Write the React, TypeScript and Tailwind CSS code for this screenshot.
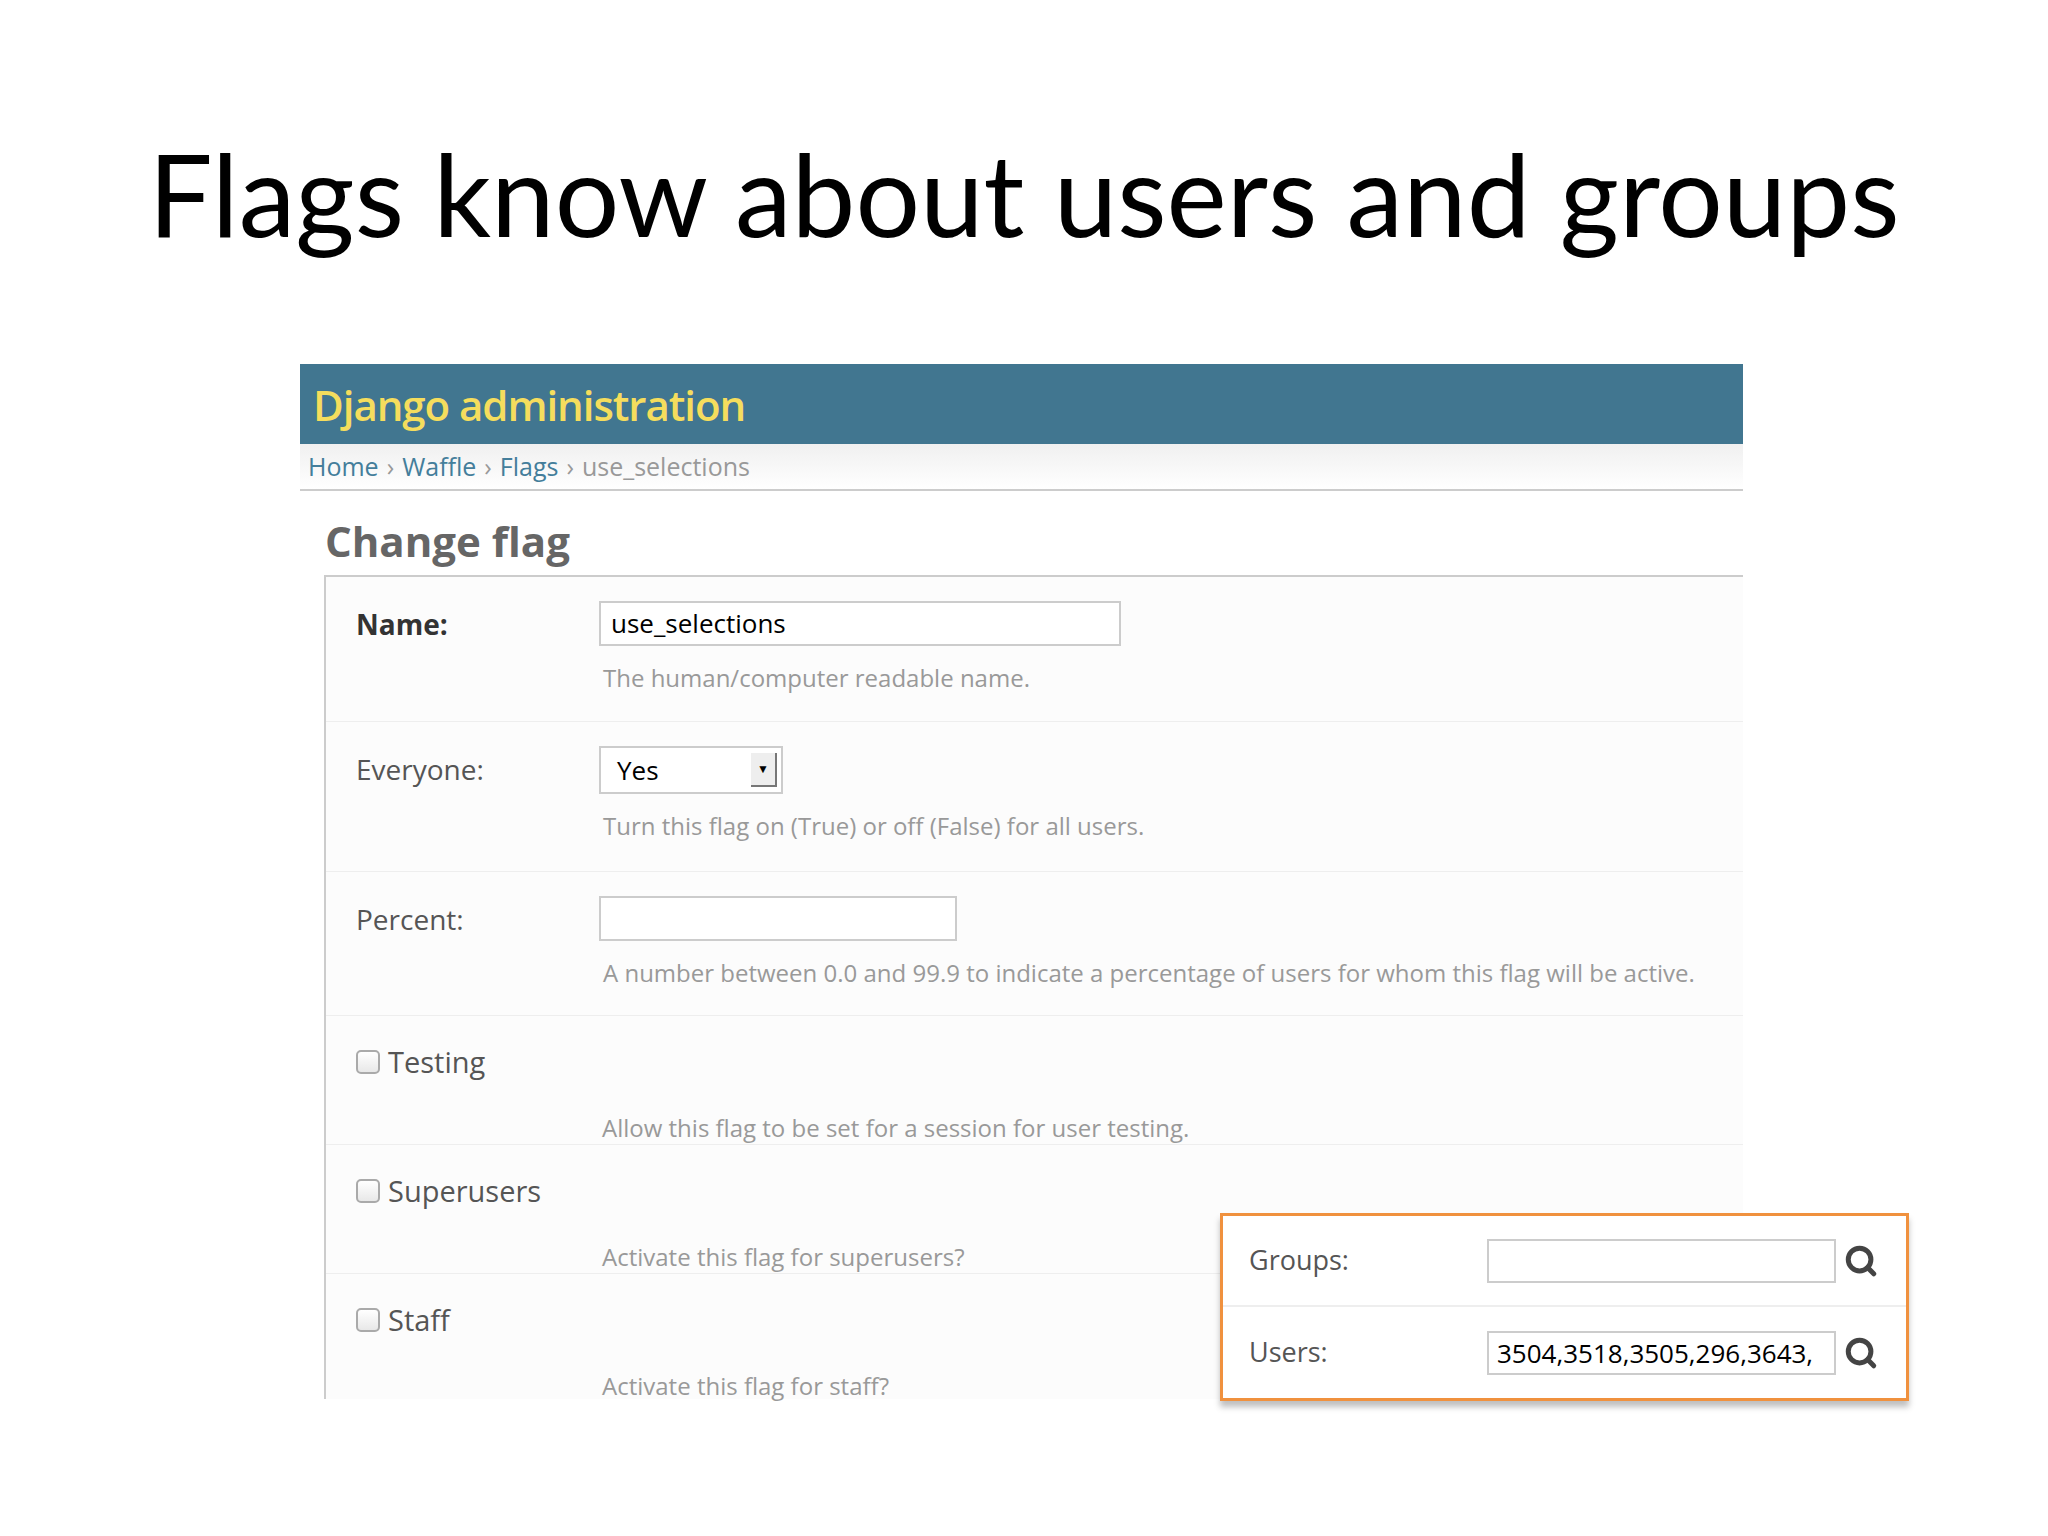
import { Search } from "lucide-react";

const rows = [
  { label: "Name:", bold: true, input: "w-[522px]", value: "use_selections", help: "The human/computer readable name.", h: "h-[145px]" },
  { label: "Everyone:", select: true, help: "Turn this flag on (True) or off (False) for all users.", h: "h-[150px]" },
  { label: "Percent:", input: "w-[358px]", value: "", help: "A number between 0.0 and 99.9 to indicate a percentage of users for whom this flag will be active.", h: "h-[144px]" },
  { label: "Testing", check: true, help: "Allow this flag to be set for a session for user testing.", h: "h-[129px]" },
  { label: "Superusers", check: true, help: "Activate this flag for superusers?", h: "h-[129px]" },
  { label: "Staff", check: true, help: "Activate this flag for staff?", h: "h-[125px]" },
];

function Row({ r }: { r: (typeof rows)[number] }) {
  return (
    <div className={`${r.h} border-b border-[#eee] last:border-b-0 pl-[30px] pt-[24px] flex`}>
      {r.check ? (
        <div className="flex flex-col">
          <div className="flex items-center gap-[8px] text-[29px] text-[#555]">
            <span className="w-[24px] h-[24px] rounded-[5px] border-2 border-[#aaa] bg-gradient-to-b from-white to-[#e8e8e8]" />
            {r.label}
          </div>
          <p className="ml-[246px] mt-[26px] text-[24px] text-[#999]">{r.help}</p>
        </div>
      ) : (
        <>
          <div className={`w-[243px] text-[28px] pt-[2px] ${r.bold ? "font-bold text-[#333]" : "text-[#555]"}`}>{r.label}</div>
          <div className="flex flex-col">
            {r.select ? (
              <div className="w-[184px] h-[48px] border-2 border-[#ccc] bg-white flex items-center justify-between pl-[16px] pr-[4px] text-[26px]">
                Yes
                <span className="w-[26px] h-[34px] bg-[#eee] border-r-2 border-b-2 border-[#777] flex items-center justify-center text-[12px]">▼</span>
              </div>
            ) : (
              <div className={`${r.input} h-[45px] border-2 border-[#ccc] bg-white px-[10px] text-[26px] leading-[41px] text-black`}>{r.value}</div>
            )}
            <p className="mt-[14px] ml-[4px] text-[24px] text-[#999]">{r.help}</p>
          </div>
        </>
      )}
    </div>
  );
}

export default function App() {
  return (
    <div className="w-[2048px] h-[1536px] bg-white relative overflow-hidden" style={{ fontFamily: '"Open Sans", sans-serif' }}>
      <h1 className="text-center pt-[118px] text-[114px] leading-[150px] text-black" style={{ fontFamily: 'Lato, sans-serif' }}>
        Flags know about users and groups
      </h1>
      <div className="ml-[300px] mt-[96px] w-[1443px]">
        <div className="h-[80px] bg-[#417690] flex items-center pl-[13px] text-[42px] font-semibold text-[#f5dd5d] tracking-tight">Django administration</div>
        <div className="h-[47px] border-b-2 border-[#ccc] bg-gradient-to-b from-[#f0f0f0] to-white flex items-center pl-[8px] text-[25px] text-[#999] gap-[8px]">
          <span className="text-[#447e9b]">Home</span>›<span className="text-[#447e9b]">Waffle</span>›<span className="text-[#447e9b]">Flags</span>›<span>use_selections</span>
        </div>
        <h2 className="ml-[25px] mt-[22px] text-[42px] font-bold text-[#666] leading-[56px]">Change flag</h2>
        <div className="ml-[24px] mt-[6px] border-t-2 border-l-2 border-[#ccc] bg-[#fcfcfc]">
          {rows.map((r) => <Row key={r.label} r={r} />)}
        </div>
      </div>
      <div className="absolute left-[1220px] top-[1213px] w-[689px] h-[188px] border-[3px] border-[#f0913e] bg-white shadow-[0_6px_6px_rgba(0,0,0,0.25)]">
        {[["Groups:", ""], ["Users:", "3504,3518,3505,296,3643,"]].map(([l, v], i) => (
          <div key={l} className={`h-[91px] flex items-center pl-[26px] ${i === 0 ? "border-b-2 border-[#eee]" : ""}`}>
            <span className="w-[238px] text-[27px] text-[#555]">{l}</span>
            <div className="w-[349px] h-[44px] border-2 border-[#ccc] px-[8px] text-[26px] leading-[40px] text-black overflow-hidden whitespace-nowrap">{v}</div>
            <Search className="ml-[8px] w-[34px] h-[34px] text-[#444]" strokeWidth={3.5} />
          </div>
        ))}
      </div>
    </div>
  );
}
